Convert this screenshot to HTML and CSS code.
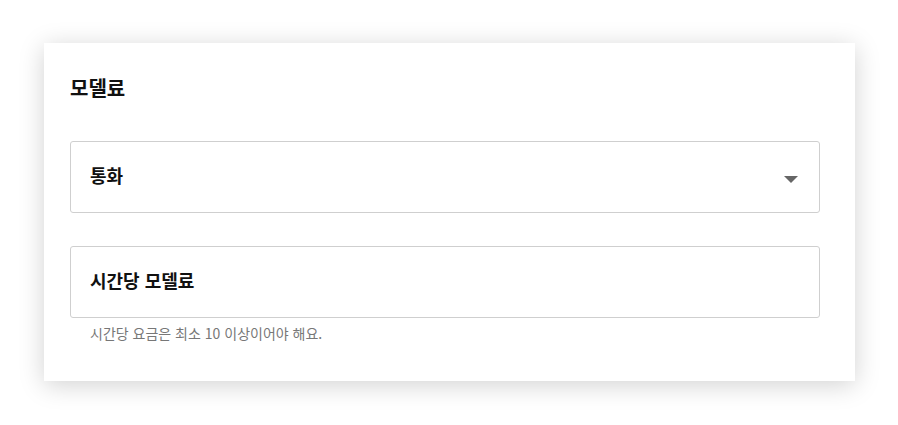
FILE: index.html
```html
<!DOCTYPE html>
<html lang="ko">

<head>
  <meta charset="UTF-8">
  <meta name="viewport" content="width=device-width, initial-scale=1.0">
  <title>모델료</title>
  <link rel="stylesheet" href="styles.css">
</head>

<body>
  <div class="card">
    <h2 class="title">모델료</h2>
    <div class="field select">
      <span class="value">통화</span>
      <span class="arrow"></span>
    </div>
    <div class="field input">
      <span class="value">시간당 모델료</span>
    </div>
    <p class="help">시간당 요금은 최소 10 이상이어야 해요.</p>
  </div>
</body>

</html>
```

FILE: styles.css
```css
body {
  margin: 0;
  padding: 43px 0 44px 44px;
  background: #fff;
  font-family: "Noto Sans CJK KR", "Noto Sans", sans-serif;
  color: #111;
}

.card {
  box-sizing: border-box;
  width: 811px;
  height: 338px;
  padding: 31px 35px 0 26px;
  background: #fff;
  box-shadow: 0 4px 24px rgba(0, 0, 0, .18);
}

.title {
  margin: 0;
  font-size: 20px;
  line-height: 28px;
  font-weight: 700;
}

.field {
  box-sizing: border-box;
  display: flex;
  align-items: center;
  height: 72px;
  padding: 0 20px 5px 19px;
  border: 1px solid #cfcfcf;
  border-radius: 3px;
}

.select {
  margin-top: 39px;
  justify-content: space-between;
}

.input {
  margin-top: 33px;
}

.value {
  font-size: 18px;
  font-weight: 700;
  line-height: 26px;
}

.arrow {
  width: 0;
  height: 0;
  margin-top: 9px;
  margin-right: 1px;
  border-left: 7px solid transparent;
  border-right: 7px solid transparent;
  border-top: 7px solid #666;
}

.help {
  margin: 5px 0 0 20px;
  font-size: 14px;
  line-height: 20px;
  color: #777;
}
```
